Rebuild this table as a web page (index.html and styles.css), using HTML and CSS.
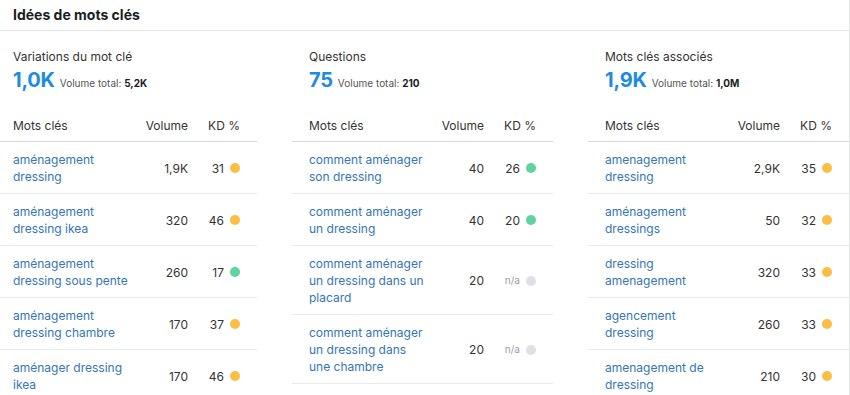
FILE: index.html
```html
<!DOCTYPE html>
<html lang="fr">
<head>
<meta charset="utf-8">
<link rel="stylesheet" href="styles.css">
</head>
<body>
<div class="card">
  <div class="card-head"><h2 class="title">Idées de mots clés</h2></div>
  <div class="cols">
    <section class="col">
      <div class="col-title">Variations du mot clé</div>
      <div class="stats"><span class="big">1,0K</span><span class="vol">Volume total: <b>5,2K</b></span></div>
      <div class="tbl">
        <div class="row head"><span>Mots clés</span><span class="num">Volume</span><span class="kd">KD %</span></div>
        <div class="row"><a class="kw">aménagement dressing</a><span class="num">1,9K</span><span class="kd">31<i class="dot o"></i></span></div>
        <div class="row"><a class="kw">aménagement dressing ikea</a><span class="num">320</span><span class="kd">46<i class="dot o"></i></span></div>
        <div class="row"><a class="kw">aménagement dressing sous pente</a><span class="num">260</span><span class="kd">17<i class="dot g"></i></span></div>
        <div class="row"><a class="kw">aménagement dressing chambre</a><span class="num">170</span><span class="kd">37<i class="dot o"></i></span></div>
        <div class="row"><a class="kw">aménager dressing ikea</a><span class="num">170</span><span class="kd">46<i class="dot o"></i></span></div>
      </div>
    </section>
    <section class="col">
      <div class="col-title">Questions</div>
      <div class="stats"><span class="big">75</span><span class="vol">Volume total: <b>210</b></span></div>
      <div class="tbl">
        <div class="row head"><span>Mots clés</span><span class="num">Volume</span><span class="kd">KD %</span></div>
        <div class="row"><a class="kw">comment aménager son dressing</a><span class="num">40</span><span class="kd">26<i class="dot g"></i></span></div>
        <div class="row"><a class="kw">comment aménager un dressing</a><span class="num">40</span><span class="kd">20<i class="dot g"></i></span></div>
        <div class="row"><a class="kw">comment aménager un dressing dans un placard</a><span class="num">20</span><span class="kd"><em class="na">n/a</em><i class="dot n"></i></span></div>
        <div class="row"><a class="kw">comment aménager un dressing dans une chambre</a><span class="num">20</span><span class="kd"><em class="na">n/a</em><i class="dot n"></i></span></div>
        <div class="row"><a class="kw">comment aménager un petit dressing</a><span class="num">20</span><span class="kd"><em class="na">n/a</em><i class="dot n"></i></span></div>
      </div>
    </section>
    <section class="col">
      <div class="col-title">Mots clés associés</div>
      <div class="stats"><span class="big">1,9K</span><span class="vol">Volume total: <b>1,0M</b></span></div>
      <div class="tbl">
        <div class="row head"><span>Mots clés</span><span class="num">Volume</span><span class="kd">KD %</span></div>
        <div class="row"><a class="kw">amenagement dressing</a><span class="num">2,9K</span><span class="kd">35<i class="dot o"></i></span></div>
        <div class="row"><a class="kw">aménagement dressings</a><span class="num">50</span><span class="kd">32<i class="dot o"></i></span></div>
        <div class="row"><a class="kw">dressing amenagement</a><span class="num">320</span><span class="kd">33<i class="dot o"></i></span></div>
        <div class="row"><a class="kw">agencement dressing</a><span class="num">260</span><span class="kd">33<i class="dot o"></i></span></div>
        <div class="row"><a class="kw">amenagement de dressing</a><span class="num">210</span><span class="kd">30<i class="dot o"></i></span></div>
      </div>
    </section>
  </div>
</div>
</body>
</html>
```
FILE: styles.css
```css
* { box-sizing: border-box; }
html, body { margin: 0; padding: 0; background: #fff; }
body {
  font-family: Inter, "Noto Sans", "Liberation Sans", sans-serif;
  font-size: 12px;
  color: #333;
  overflow: hidden;
  height: 395px;
}
.card {
  width: 850px;
  border-right: 1px solid #e4e5e8;
  min-height: 395px;
}
.card-head {
  height: 31px;
  border-bottom: 1px solid #e4e5e8;
  padding: 0 13px;
  display: flex;
  align-items: center;
}
.title {
  margin: 0;
  font-size: 14px;
  font-weight: 700;
  color: #1b1d24;
  line-height: 20px;
  padding-bottom: 1px;
}
.cols {
  display: grid;
  grid-template-columns: 261px 261px 261px;
  column-gap: 35px;
  margin-left: -4px;
  padding-top: 17px;
}
.col { padding: 0; }
.col-title {
  padding: 0 17px;
  line-height: 17px;
  color: #333;
}
.stats {
  padding: 0 17px;
  margin-top: 3px;
  display: flex;
  align-items: baseline;
  gap: 5px;
  line-height: 24px;
}
.big {
  font-size: 20px;
  font-weight: 700;
  color: #1d8be3;
  letter-spacing: -0.2px;
}
.vol { font-size: 10px; color: #555; }
.vol b { color: #1b1d24; font-weight: 700; }
.tbl { margin-top: 14px; }
.row {
  display: grid;
  grid-template-columns: 1fr 45px 52px;
  align-items: center;
  padding: 9px 17px 8px;
  border-bottom: 1px solid #e8e9ec;
  line-height: 17px;
}
.row.head {
  padding: 8px 17px 7px;
  border-bottom: 1px solid #d5d7dc;
  color: #333;
}
.kw {
  color: #3675b3;
  text-decoration: none;
  padding-right: 13px;
}
.num { text-align: right; }
.kd {
  display: flex;
  justify-content: flex-end;
  align-items: center;
  gap: 6px;
}
.na {
  font-style: normal;
  font-size: 10px;
  color: #9a9ca3;
}
.dot {
  display: inline-block;
  width: 10px;
  height: 10px;
  border-radius: 50%;
  flex: none;
}
.dot.o { background: #fbbd42; }
.dot.g { background: #5cd3a0; }
.dot.n { background: #dfe0e5; }
```
